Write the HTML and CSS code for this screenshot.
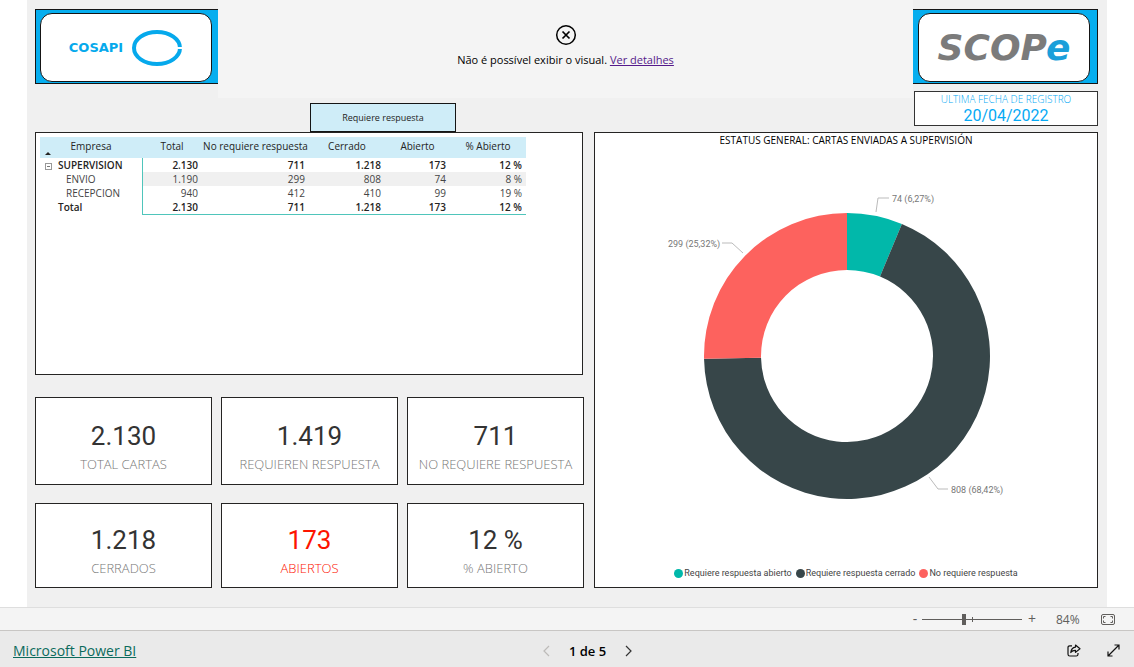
FILE: index.html
```html
<!DOCTYPE html>
<html lang="es">
<head>
<meta charset="utf-8">
<meta name="viewport" content="width=device-width, initial-scale=1">
<title>Microsoft Power BI</title>
<link rel="stylesheet" href="styles.css">
</head>
<body>
<main class="report">
  <header class="top">
    <div class="brand brand-left">
      <div class="brand-plate">
        <span class="cosapi">COSAPI</span>
        <svg class="cosapi-ring" viewBox="0 0 52 38" aria-hidden="true">
          <ellipse cx="26" cy="19" rx="23" ry="16" fill="none" stroke="#06a9ec" stroke-width="4"/>
          <path d="M46 19h6" stroke="#fff" stroke-width="2"/>
        </svg>
      </div>
    </div>
    <div class="visual-error">
      <svg class="error-icon" viewBox="0 0 22 22" aria-hidden="true">
        <circle cx="11" cy="11" r="9.300" fill="none" stroke="#000" stroke-width="1.500"/>
        <path d="M7.500 7.500l7 7M14.500 7.500l-7 7" stroke="#000" stroke-width="1.700"/>
      </svg>
      <p class="error-text">Não é possível exibir o visual. <a href="#detalhes">Ver detalhes</a></p>
    </div>
    <div class="top-right">
      <div class="brand brand-right">
        <div class="brand-plate"><span class="scope">SCOP<span class="scope-e">e</span></span></div>
      </div>
      <div class="date-card">
        <span class="date-label">ULTIMA FECHA DE REGISTRO</span>
        <span class="date-value">20/04/2022</span>
      </div>
    </div>
    <div class="tab-row"><button class="tab" type="button">Requiere respuesta</button></div>
  </header>

  <div class="content">
    <div class="left">
      <section class="panel matrix">
        <table>
          <colgroup><col class="c-name"><col class="c-total"><col class="c-no"><col class="c-closed"><col class="c-open"><col class="c-pct"></colgroup>
          <thead>
            <tr><th scope="col">Empresa<span class="sort"></span></th><th scope="col">Total</th><th scope="col">No requiere respuesta</th><th scope="col">Cerrado</th><th scope="col">Abierto</th><th scope="col">% Abierto</th></tr>
          </thead>
          <tbody>
            <tr class="strong"><th scope="row"><button class="toggle" type="button" aria-label="Contraer SUPERVISION"></button>SUPERVISION</th><td>2.130</td><td>711</td><td>1.218</td><td>173</td><td>12 %</td></tr>
            <tr class="child shade"><th scope="row">ENVIO</th><td>1.190</td><td>299</td><td>808</td><td>74</td><td>8 %</td></tr>
            <tr class="child"><th scope="row">RECEPCION</th><td>940</td><td>412</td><td>410</td><td>99</td><td>19 %</td></tr>
            <tr class="strong total"><th scope="row">Total</th><td>2.130</td><td>711</td><td>1.218</td><td>173</td><td>12 %</td></tr>
          </tbody>
        </table>
      </section>
      <section class="cards">
        <div class="card"><span class="num">2.130</span><span class="cap">TOTAL CARTAS</span></div>
        <div class="card"><span class="num">1.419</span><span class="cap">REQUIEREN RESPUESTA</span></div>
        <div class="card"><span class="num">711</span><span class="cap">NO REQUIERE RESPUESTA</span></div>
        <div class="card"><span class="num">1.218</span><span class="cap">CERRADOS</span></div>
        <div class="card alert"><span class="num">173</span><span class="cap">ABIERTOS</span></div>
        <div class="card"><span class="num">12 %</span><span class="cap">% ABIERTO</span></div>
      </section>
    </div>

    <section class="panel chart">
      <h2 class="chart-title">ESTATUS GENERAL: CARTAS ENVIADAS A SUPERVISIÓN</h2>
      <svg class="donut" viewBox="0 0 502 412" role="img" aria-label="Estatus general">
        <path fill="#01b8aa" d="M252 62A143 143 0 0 1 306.900 72.960L285.010 125.600A86 86 0 0 0 252 119Z"/>
        <path fill="#374649" d="M306.900 72.960A143 143 0 1 1 109.030 207.870L166.020 206.720A86 86 0 1 0 285.010 125.600Z"/>
        <path fill="#fd625e" d="M109.030 207.870A143 143 0 0 1 252 62L252 119A86 86 0 0 0 166.020 206.720Z"/>
        <g class="leaders">
          <path d="M281 61L283 47H294"/>
          <path d="M148 102L137 92H127"/>
          <path d="M334 326L343 338H353"/>
        </g>
        <g class="labels">
          <text x="297" y="51">74 (6,27%)</text>
          <text x="73" y="96">299 (25,32%)</text>
          <text x="356" y="342">808 (68,42%)</text>
        </g>
      </svg>
      <ul class="legend">
        <li><span class="dot open"></span>Requiere respuesta abierto</li>
        <li><span class="dot closed"></span>Requiere respuesta cerrado</li>
        <li><span class="dot none"></span>No requiere respuesta</li>
      </ul>
    </section>
  </div>
</main>

<div class="zoom-bar">
  <button class="step" type="button" aria-label="Alejar">-</button>
  <input class="zoom-range" type="range" min="0" max="200" value="84" aria-label="Zoom">
  <button class="step" type="button" aria-label="Acercar">+</button>
  <span class="zoom-value">84%</span>
  <button class="icon-btn" type="button" aria-label="Ajustar a la página">
    <svg width="14" height="11" viewBox="0 0 14 11" fill="none" stroke="#605e5c"><rect x=".5" y=".5" width="13" height="10" rx="1.500"/><path d="M2.500 4.500v-2h2M9.500 2.500h2v2M2.500 6.500v2h2M9.500 8.500h2v-2"/></svg>
  </button>
</div>
<footer class="footer">
  <a class="pbi" href="#powerbi">Microsoft Power BI</a>
  <nav class="pager" aria-label="Páginas">
    <button class="icon-btn" type="button" aria-label="Anterior" disabled><svg width="8" height="12" viewBox="0 0 8 12" fill="none" stroke="#bdbbb9" stroke-width="1.200"><path d="M7 1L2 6l5 5"/></svg></button>
    <span class="page">1 de 5</span>
    <button class="icon-btn" type="button" aria-label="Siguiente"><svg width="8" height="12" viewBox="0 0 8 12" fill="none" stroke="#333" stroke-width="1.200"><path d="M1 1l5 5-5 5"/></svg></button>
  </nav>
  <div class="actions">
    <button class="icon-btn" type="button" aria-label="Compartir"><svg width="14" height="13" viewBox="0 0 14 13" fill="none" stroke="#111" stroke-width="1.200"><path d="M5 1.800H2.800Q1 1.800 1 3.600v6.600Q1 12 2.800 12h6.400q1.800 0 1.800-1.800V9"/><path d="M8.500 1l4.500 3.700-4.500 3.700V6.300Q5.500 6.200 3.800 8.500 4.300 3.600 8.500 3.100Z" stroke-linejoin="round"/></svg></button>
    <button class="icon-btn" type="button" aria-label="Pantalla completa"><svg width="13" height="13" viewBox="0 0 13 13" fill="none" stroke="#111" stroke-width="1.200"><path d="M1 12L12 1M7.500 1H12v4.500M1 7.500V12h4.500"/></svg></button>
  </div>
</footer>
</body>
</html>
```
FILE: styles.css
```css
* { box-sizing: border-box; }
body {
  margin: 0;
  min-height: 100vh;
  display: flex;
  flex-direction: column;
  background: #fff;
  color: #252423;
  font-family: "Open Sans", "Noto Sans", sans-serif;
  font-size: 10px;
}
button { font: inherit; color: inherit; background: none; border: 0; padding: 0; cursor: pointer; }
svg { display: block; }

.report {
  flex: 1;
  display: flex;
  flex-direction: column;
  margin: 0 27px;
  padding: 0 9px 19px 8px;
  background: #f0f0f0;
}

.top {
  display: grid;
  grid-template-columns: 183px 1fr 185px;
  grid-template-rows: 98px auto;
}
.brand {
  height: 75px;
  padding: 3px 7px 3px 5px;
  background: #06aeef;
  border: 1px solid #151515;
}
.brand-left { margin-top: 9px; padding: 3px 6px 3px 4px; border-right: 0; }
.brand-right { border-left: 0; }
.brand-plate {
  height: 69px;
  display: flex;
  align-items: center;
  justify-content: center;
  background: #fff;
  border: 1px solid #151515;
  border-radius: 12px;
}
.cosapi { font: bold 13px "DejaVu Sans", sans-serif; color: #06a9ec; }
.cosapi-ring { flex: none; width: 52px; height: 38px; margin-left: 8px; }
.scope { font: italic bold 36px "DejaVu Sans", sans-serif; line-height: 36px; color: #7b7b7b; }
.scope-e { color: #1b9fda; }

.visual-error {
  display: flex;
  flex-direction: column;
  align-items: center;
  padding-top: 24px;
  background: #f4f4f4;
  color: #000;
}
.error-icon { width: 22px; height: 22px; }
.error-text { margin: 5px 0 0; font-size: 11px; line-height: 18px; }
.error-text a { color: #551a8b; }

.top-right { grid-column: 3; grid-row: 1 / 3; padding-top: 9px; }
.date-card {
  height: 35px;
  margin: 7px 0 0 1px;
  display: flex;
  flex-direction: column;
  align-items: center;
  background: #fff;
  border: 1px solid #333;
  color: #06a9f4;
}
.date-label { font-size: 10px; font-weight: 300; line-height: 15px; }
.date-value { font: 16px/18px Roboto, sans-serif; }

.tab-row { grid-column: 1 / 3; grid-row: 2; padding: 5px 0 0 275px; }
.tab {
  display: block;
  width: 146px;
  height: 29px;
  background: #cfedf8;
  border: 1px solid #151515;
  font-size: 9px;
}

.content {
  flex: 1;
  display: grid;
  grid-template-columns: 549fr 504fr;
  gap: 10px;
}
.left { display: flex; flex-direction: column; gap: 22px; }
.panel { background: #fff; border: 1px solid #252423; }
.matrix { flex: 1; padding: 4px; margin-right: 1px; }
.matrix table { width: 486px; max-width: 100%; table-layout: fixed; border-collapse: collapse; }
.c-name { width: 102px; }
.c-total { width: 60px; }
.c-no { width: 107px; }
.c-closed { width: 76px; }
.c-open { width: 65px; }
.c-pct { width: 76px; }
.matrix th, .matrix td { padding: 0; font-weight: 400; }
.matrix thead th { position: relative; height: 21px; padding-bottom: 3px; background: #cfedf8; line-height: 16px; white-space: nowrap; }
.sort {
  position: absolute;
  left: 5px;
  bottom: 3px;
  border: 3px solid transparent;
  border-top: 0;
  border-bottom-color: #252423;
}
.matrix tbody th { height: 14px; padding-left: 18px; line-height: 14px; text-align: left; }
.matrix tbody td { padding-right: 4px; line-height: 14px; text-align: right; }
.matrix tbody td:nth-child(2) { border-left: 1px solid #4fc5bb; }
.matrix .strong th, .matrix .strong td { font-weight: 600; }
.matrix .strong th { position: relative; }
.matrix .child th { padding-left: 26px; color: #444; }
.matrix .child td { color: #444; }
.shade td { background: #f0f0f0; }
.total td { border-bottom: 1px solid #4fc5bb; }
.toggle {
  position: absolute;
  left: 5px;
  top: 5px;
  width: 7px;
  height: 7px;
  border: 1px solid #999;
  background: linear-gradient(#777, #777) center / 3px 1px no-repeat;
}

.cards {
  display: grid;
  grid-template-columns: repeat(3, 1fr);
  grid-template-rows: 88px 85px;
  gap: 18px 9px;
}
.card {
  display: flex;
  flex-direction: column;
  align-items: center;
  justify-content: center;
  padding-top: 13px;
  background: #fff;
  border: 1px solid #252423;
}
.num { font: 26px/32px Roboto, sans-serif; color: #333; }
.cap { font-size: 13px; font-weight: 300; line-height: 24px; color: #777; white-space: nowrap; }
.alert .num, .alert .cap { color: #fd1400; }

.chart { display: flex; flex-direction: column; }
.chart-title { margin: 0; color: #000; font-size: 10px; font-weight: 400; line-height: 15px; text-align: center; }
.donut { flex: 1; width: 100%; min-height: 0; }
.leaders { fill: none; stroke: #bbb; }
.labels { font: 9px Roboto, sans-serif; fill: #777; }
.legend {
  display: flex;
  justify-content: center;
  gap: 4px;
  margin: 0;
  padding: 0 0 6px;
  list-style: none;
  font: 9px/15px Roboto, sans-serif;
  color: #444;
}
.legend li { display: flex; align-items: center; gap: 1px; }
.dot { width: 9px; height: 9px; border-radius: 50%; }
.open { background: #01b8aa; }
.closed { background: #374649; }
.none { background: #fd625e; }

.zoom-bar {
  display: flex;
  align-items: center;
  justify-content: flex-end;
  height: 23px;
  padding-right: 19px;
  background: #f4f4f4;
  border-top: 1px solid #dedede;
  color: #605e5c;
}
.step { width: 12px; font-size: 14px; line-height: 16px; }
.zoom-range {
  appearance: none;
  width: 100px;
  height: 12px;
  margin: 0 4px 0 1px;
  background:
    linear-gradient(#605e5c, #605e5c) 50px 50% / 1px 5px no-repeat,
    linear-gradient(#605e5c, #605e5c) 0 50% / 100% 1px no-repeat;
}
.zoom-range::-webkit-slider-thumb { appearance: none; width: 4px; height: 11px; background: #605e5c; }
.zoom-value { width: 26px; margin: 0 19px 0 18px; font-size: 12px; }
.icon-btn { display: grid; place-items: center; }

.footer {
  display: grid;
  grid-template-columns: 1fr auto 1fr;
  align-items: center;
  height: 37px;
  padding: 3px 14px 0 13px;
  background: #eaeaea;
  border-top: 1px solid #c8c6c4;
}
.pbi { color: #0b6a5c; font-size: 14px; justify-self: start; }
.pager { display: flex; align-items: center; gap: 19px; padding-left: 42px; }
.page { color: #000; font-size: 13px; font-weight: 600; }
.actions { display: flex; align-items: center; justify-content: flex-end; gap: 26px; }
```
